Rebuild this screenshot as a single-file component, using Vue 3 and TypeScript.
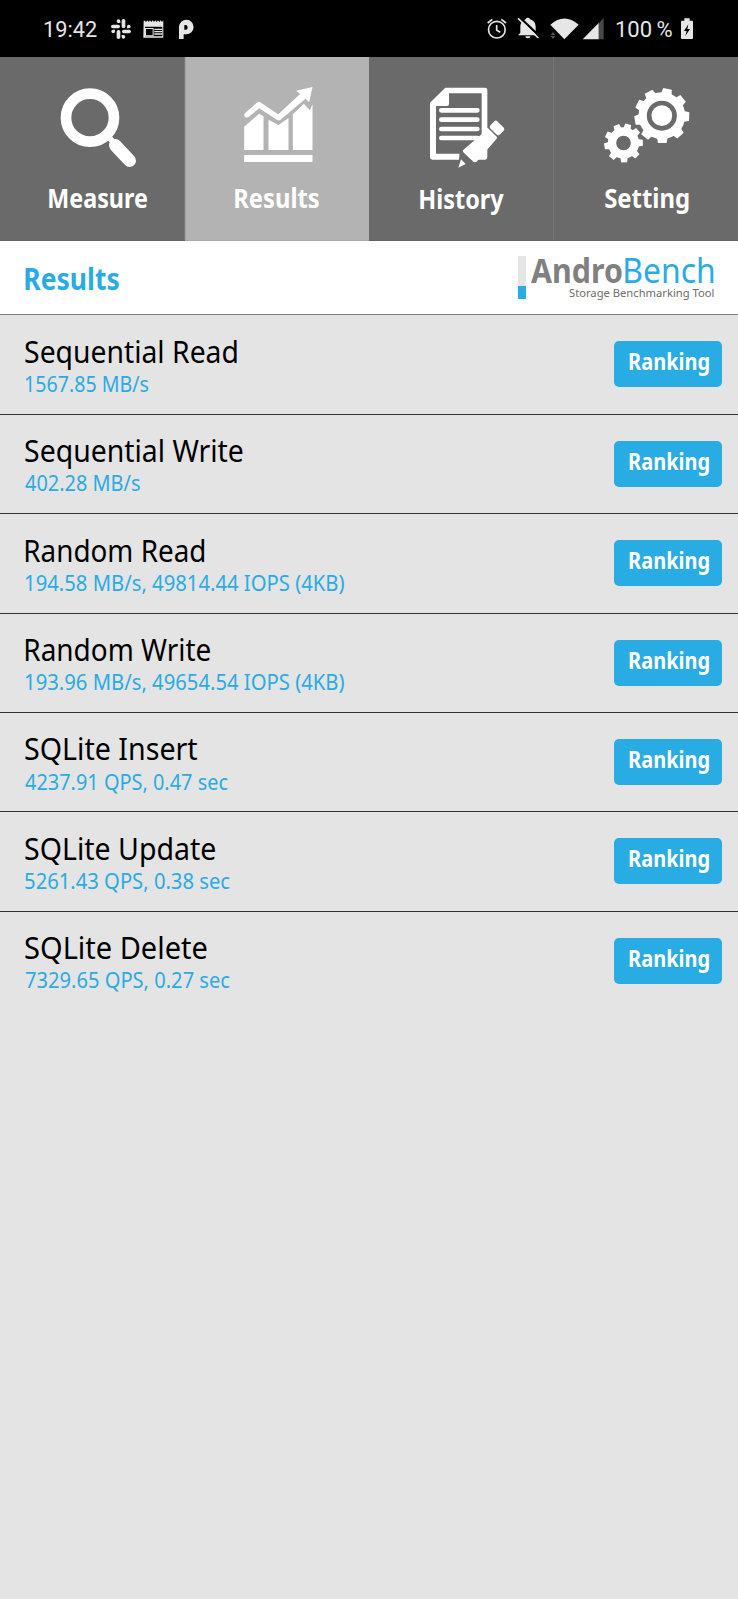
<script setup lang="ts">
import type { Directive } from 'vue'

interface Result {
  title: string
  titleWidth: number
  value: string
  valueWidth: number
}

const results: Result[] = [
  { title: 'Sequential Read', titleWidth: 212, value: '1567.85 MB/s', valueWidth: 123.5 },
  { title: 'Sequential Write', titleWidth: 217.5, value: '402.28 MB/s', valueWidth: 115 },
  { title: 'Random Read', titleWidth: 178.5, value: '194.58 MB/s, 49814.44 IOPS (4KB)', valueWidth: 319 },
  { title: 'Random Write', titleWidth: 184, value: '193.96 MB/s, 49654.54 IOPS (4KB)', valueWidth: 319 },
  { title: 'SQLite Insert', titleWidth: 172.5, value: '4237.91 QPS, 0.47 sec', valueWidth: 202.5 },
  { title: 'SQLite Update', titleWidth: 190, value: '5261.43 QPS, 0.38 sec', valueWidth: 204.5 },
  { title: 'SQLite Delete', titleWidth: 181.5, value: '7329.65 QPS, 0.27 sec', valueWidth: 204.5 },
]

const bigTeeth = [-119, -78, -39, 2, 47, 89, 129, 170, 206]
const smallTeeth = [-112, -76, -41, -1, 44, 88, 129, 170, 207]
const slackTurns = [0, 90, 180, 270]

// Condenses a label horizontally so that its visible ink has the given width.
const vFit: Directive<HTMLElement, number> = {
  mounted(el, { value }) {
    const ctx = document.createElement('canvas').getContext('2d')
    if (!ctx) return
    const cs = getComputedStyle(el)
    ctx.font = `${cs.fontWeight} ${cs.fontSize} ${cs.fontFamily}`
    const m = ctx.measureText((el.textContent ?? '').trim())
    const scale = value / (m.actualBoundingBoxRight + m.actualBoundingBoxLeft)
    el.style.transform = `translateX(${m.actualBoundingBoxLeft * scale}px) scaleX(${scale})`
  },
}
</script>

<template>
  <div class="screen">
    <header class="status">
      <div class="clock"><span v-fit="53" class="fit">19:42</span></div>
      <svg class="status-left" viewBox="320 0 280 171" aria-hidden="true">
        <g fill="#e6e6e6">
          <g v-for="a in slackTurns" :key="a" :transform="`rotate(${a} 362 87)`">
            <rect x="364" y="57" width="11" height="27" rx="5.500" />
            <path d="M360 69v-6a5.500 5.500 0 1 0-5.500 6z" />
          </g>
          <path d="M430 62h4l3 4 4-5 4 5 4-5 4 5 4-5 4 5 4-5 4 5 4-5 4 5 4-5 4 5 4-5v52h-60zM434 80v29h52V80z" fill-rule="evenodd" />
          <path d="M434 84h26v25h-26zM437 87v19h20V87z" fill-rule="evenodd" />
          <path d="M462 86h24v4h-24zM462 93h24v4h-24zM462 100h24v4h-24z" />
          <path d="M536 117V80a22 22 0 1 1 22 23h-8v14zM552 76v13h6a6.500 6.500 0 1 0-6-13z" fill-rule="evenodd" />
        </g>
      </svg>
      <svg class="status-right" viewBox="40 0 380 171" aria-hidden="true">
        <g fill="none" stroke="#e6e6e6" stroke-width="5">
          <circle cx="81.500" cy="89" r="25" />
          <path d="M81 75v16l11 6M54 69l14-11M95 58l14 11" />
        </g>
        <path fill="#e6e6e6" d="M145 106l7-8V81c0-14 8-20 16-23a7 7 0 0 1 13 0c10 3 17 10 17 23v17l7 8zM167 109h15a7.500 6 0 0 1-15 0z" />
        <path d="M150 52l60 57" stroke="#000" stroke-width="7" />
        <path d="M145 55l61 59" stroke="#e6e6e6" stroke-width="5" />
        <path fill="#e6e6e6" d="M242 74q42-37 85 0l-43 44z" />
        <path fill="#555" d="M243 105l7-9 7 9zM243 108h14l-7 9z" />
        <path fill="#484848" d="M387 70l15-16v64h-15z" />
        <path fill="#e6e6e6" d="M339 118l48-49v49z" />
      </svg>
      <div class="percent"><span v-fit="57" class="fit">100 %</span></div>
      <svg class="battery" viewBox="630 0 42 171" aria-hidden="true">
        <path fill="#e6e6e6" d="M643 62v-7h16v7h7q3 0 3 3v49q0 3-3 3h-30q-3 0-3-3V65q0-3 3-3z" />
        <path fill="#000" d="M655 73l-13 20h8l-4 15 14-21h-8z" />
      </svg>
    </header>

    <nav class="tabs">
      <a class="tab">
        <svg class="icon" viewBox="0 6 553.500 360" aria-hidden="true">
          <circle cx="270" cy="188" r="72" fill="none" stroke="#fff" stroke-width="32" />
          <path d="M320 240l24 26" stroke="#fff" stroke-width="17" />
          <path d="M346 271l43 46" stroke="#fff" stroke-width="38" stroke-linecap="round" />
        </svg>
        <span class="label measure"><b v-fit="98.5" class="fit">Measure</b></span>
      </a>
      <a class="tab active">
        <svg class="icon" viewBox="13.500 6 553.500 360" aria-hidden="true">
          <g fill="#fff">
            <path d="M191 300h205v21H191zM191 285v-70l45-39 13 8v101zM264 285v-91l30 16 30-21v96zM337 285v-107l33-32 18 20 8-18v137z" />
            <path d="M396 96l-10 46-11-11-75 63q-5 4-11 0l-53-34-32 26q-7 4-11-1t0-10l36-32q5-4 10-1l54 36 66-61-12-10z" />
          </g>
        </svg>
        <span class="label results"><b v-fit="84" class="fit">Results</b></span>
      </a>
      <a class="tab">
        <svg class="icon" viewBox="12 6 553.500 360" aria-hidden="true">
          <path fill="#fff" fill-rule="evenodd" d="M241 98h119q7 0 7 7v202q0 7-7 7H202q-7 0-7-7V143zM252 115v32q0 6-6 6h-33v143h137V115z" />
          <path d="M229 166h108M229 194h108M229 222h108M229 249h108" stroke="#fff" stroke-width="14" stroke-linecap="round" />
          <path fill="#6a6a6a" d="M284 292l10-4 35 36v20h-50z" />
          <path fill="#fff" d="M350 237l18-19 28 28-1 5-61 70-7 1-33-31v-5zM280 338l8-25 14 14z" />
          <rect x="-20" y="-15" width="40" height="30" rx="7" fill="#fff" transform="translate(396 219) rotate(45)" />
        </svg>
        <span class="label history"><b v-fit="84" class="fit">History</b></span>
      </a>
      <a class="tab">
        <svg class="icon" viewBox="16.500 6 553.500 360" aria-hidden="true">
          <g fill="#fff">
            <circle cx="340" cy="182" r="57.500" fill="none" stroke="#fff" stroke-width="25" />
            <circle cx="340" cy="182" r="31" />
            <path v-for="a in bigTeeth" :key="a" d="M66-16L82-13V13L66 16z" :transform="`translate(340 182) rotate(${a})`" />
            <circle cx="225" cy="264" r="34.500" fill="none" stroke="#fff" stroke-width="25" />
            <path v-for="a in smallTeeth" :key="a" d="M44-11L58-9V9L44 11z" :transform="`translate(225 264) rotate(${a})`" />
          </g>
        </svg>
        <span class="label setting"><b v-fit="84" class="fit">Setting</b></span>
      </a>
    </nav>

    <section class="heading">
      <h1><span v-fit="94.5" class="fit">Results</span></h1>
      <div class="brand">
        <div class="gauge"></div>
        <div class="brand-text">
          <div class="wordmark">
            <span class="andro"><b v-fit="90.5" class="fit">Andro</b></span>
            <span class="bench"><span v-fit="88.500" class="fit">Bench</span></span>
          </div>
          <div class="tagline"><span v-fit="144.5" class="fit">Storage Benchmarking Tool</span></div>
        </div>
      </div>
    </section>

    <ul class="list">
      <li v-for="r in results" :key="r.title" class="row">
        <div class="info">
          <div class="title" :class="{ stem: r.title.startsWith('R') }"><span v-fit="r.titleWidth" class="fit">{{ r.title }}</span></div>
          <div class="value"><span v-fit="r.valueWidth" class="fit">{{ r.value }}</span></div>
        </div>
        <button class="rank"><span v-fit="80" class="fit">Ranking</span></button>
      </li>
    </ul>
  </div>
</template>

<style>
body {
  margin: 0;
  background: #e4e4e4;
}
</style>

<style scoped>
.screen {
  width: 738px;
  height: 1599px;
  overflow: hidden;
  background: #e4e4e4;
  font-family: 'Noto Sans', 'Open Sans', sans-serif;
}
.fit {
  display: inline-block;
  white-space: nowrap;
  transform-origin: 0 50%;
}
.status {
  display: flex;
  height: 57px;
  background: #000;
  color: #e6e6e6;
  font: 400 21.5px/60px Roboto, sans-serif;
}
.status > * {
  flex: none;
}
.clock {
  box-sizing: border-box;
  width: 106.7px;
  padding-left: 43.8px;
}
.status-left {
  width: 93.3px;
  height: 57px;
}
.status-right {
  width: 126.7px;
  height: 57px;
  margin-left: 283.3px;
}
.percent {
  width: 70px;
  padding-left: 6.5px;
  box-sizing: border-box;
  word-spacing: -1px;
}
.battery {
  width: 14px;
  height: 57px;
}
.tabs {
  display: grid;
  grid-template-columns: 184.5px 184.5px 184.5px 184.5px;
  height: 184px;
}
.tab {
  display: flex;
  flex-direction: column;
  box-sizing: border-box;
  background: #6a6a6a;
  border-bottom: 1px solid #626262;
  box-shadow: inset -1px 0 #777;
  color: #fff;
}
.tab:last-child {
  box-shadow: none;
}
.tab.active {
  background: #b3b3b3;
  border-bottom-color: #a8a8a8;
  box-shadow: inset 1px 0 #a4a4a4;
}
.icon {
  width: 184.5px;
  height: 120px;
}
.label {
  padding-top: 0.5px;
  font-size: 27.5px;
  line-height: 40px;
}
.label b {
  font-weight: 700;
}
.measure {
  padding-left: 49px;
}
.results {
  padding-left: 50.5px;
}
.history {
  padding-left: 51px;
  padding-top: 1.5px;
}
.setting {
  padding-left: 51.5px;
}
.heading {
  display: flex;
  justify-content: space-between;
  box-sizing: border-box;
  height: 74px;
  background: #fff;
  border-bottom: 1px solid #808080;
}
h1 {
  margin: 0;
  padding: 12.6px 0 0 24.8px;
  color: #29abe4;
  font-size: 30.5px;
  font-weight: 700;
  line-height: 48px;
}
.brand {
  display: flex;
  width: 220.5px;
  padding-top: 15px;
}
.gauge {
  width: 8px;
  height: 43px;
  background: linear-gradient(#e5e5e5 30px, #29abe4 30px);
}
.brand-text {
  padding-left: 5px;
}
.wordmark {
  display: flex;
  height: 30px;
  font-size: 34.5px;
  line-height: 27px;
}
.andro {
  width: 94.5px;
  color: #808080;
}
.andro b {
  font-weight: 700;
}
.bench {
  color: #29abe4;
}
.tagline {
  padding-left: 38.5px;
  color: #6c6c6c;
  font-size: 11.5px;
  line-height: 13px;
}
.list {
  margin: 0;
  padding: 0.5px 0 0;
  list-style: none;
}
.row {
  display: flex;
  justify-content: space-between;
  box-sizing: border-box;
  height: 99.4px;
  padding: 17.4px 16px 0 24.6px;
  border-bottom: 1px solid #333;
}
.row:last-child {
  border-bottom: 0;
}
.title {
  color: #000;
  font-size: 31px;
  line-height: 36px;
}
.title.stem {
  padding-left: 1.2px;
}
.value {
  margin-top: -0.8px;
  color: #29abe4;
  font-size: 22px;
  line-height: 30px;
}
.rank {
  display: block;
  width: 108px;
  height: 46px;
  margin: 8.5px 0 0;
  padding: 0 0 0 14.8px;
  border: 0;
  border-radius: 5px;
  background: #29abe4;
  color: #fff;
  font: 700 22.5px/42.5px 'Noto Sans', 'Open Sans', sans-serif;
  text-align: left;
}
.rank .fit {
  display: block;
  height: 46px;
}
</style>
